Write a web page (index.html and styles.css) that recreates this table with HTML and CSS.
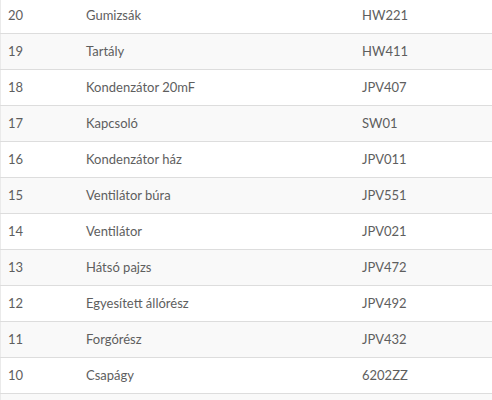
FILE: index.html
```html
<!DOCTYPE html>
<html>
<head>
<meta charset="utf-8">
<link rel="stylesheet" href="styles.css">
</head>
<body>
<table class="parts">
  <tbody>
    <tr><td class="num">20</td><td class="name">Gumizsák</td><td class="code">HW221</td></tr>
    <tr><td class="num">19</td><td class="name">Tartály</td><td class="code">HW411</td></tr>
    <tr><td class="num">18</td><td class="name">Kondenzátor 20mF</td><td class="code">JPV407</td></tr>
    <tr><td class="num">17</td><td class="name">Kapcsoló</td><td class="code">SW01</td></tr>
    <tr><td class="num">16</td><td class="name">Kondenzátor ház</td><td class="code">JPV011</td></tr>
    <tr><td class="num">15</td><td class="name">Ventilátor búra</td><td class="code">JPV551</td></tr>
    <tr><td class="num">14</td><td class="name">Ventilátor</td><td class="code">JPV021</td></tr>
    <tr><td class="num">13</td><td class="name">Hátsó pajzs</td><td class="code">JPV472</td></tr>
    <tr><td class="num">12</td><td class="name">Egyesített állórész</td><td class="code">JPV492</td></tr>
    <tr><td class="num">11</td><td class="name">Forgórész</td><td class="code">JPV432</td></tr>
    <tr><td class="num">10</td><td class="name">Csapágy</td><td class="code">6202ZZ</td></tr>
    <tr><td class="num">&nbsp;</td><td class="name">&nbsp;</td><td class="code">&nbsp;</td></tr>
  </tbody>
</table>
</body>
</html>
```
FILE: styles.css
```css
html, body {
  margin: 0;
  padding: 0;
  background: #fff;
}
body {
  font-family: Lato, "Open Sans", sans-serif;
  font-size: 13px;
  color: #5e5e5e;
  overflow: hidden;
}
.parts {
  width: 100%;
  border-collapse: collapse;
  margin-top: -3px;
  border-left: 1px solid #eaeaea;
}
.parts td {
  padding: 8px;
  line-height: 19px;
  border-top: 1px solid #ddd;
  text-align: left;
  vertical-align: top;
}
.parts tr:nth-child(even) td {
  background: #f9f9f9;
}
.parts .num { width: 62px; padding-left: 7px; }
.parts .name { width: 260px; }
```
